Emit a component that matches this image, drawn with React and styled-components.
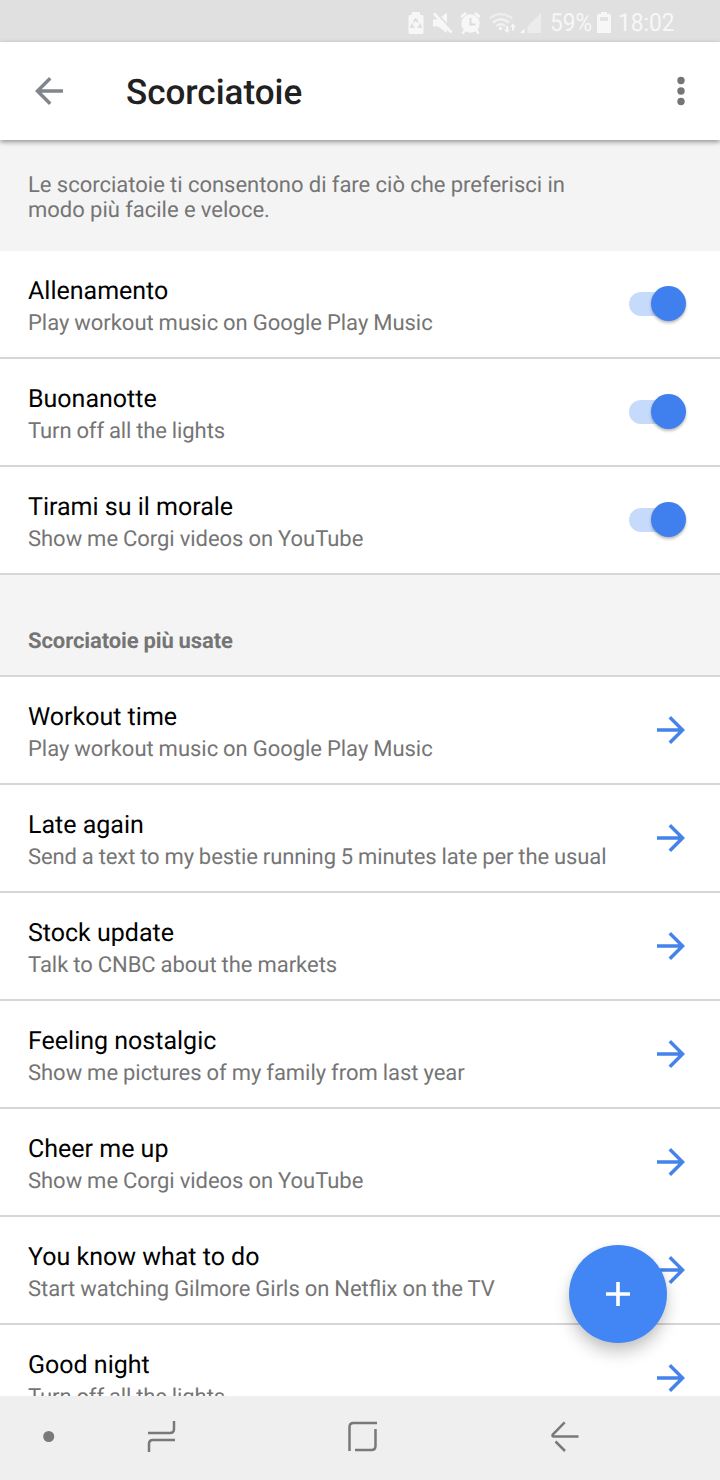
import React from 'react';
import styled, { createGlobalStyle, css } from 'styled-components';

const GlobalStyle = createGlobalStyle`
  * {
    box-sizing: border-box;
  }

  body {
    margin: 0;
    font-family: Roboto, 'Liberation Sans', sans-serif;
    text-rendering: geometricPrecision;
  }
`;

const Screen = styled.div`
  position: relative;
  display: flex;
  flex-direction: column;
  width: 720px;
  height: 1480px;
  overflow: hidden;
  background: #fff;
`;

const StatusBar = styled.div`
  display: flex;
  flex: none;
  align-items: center;
  justify-content: flex-end;
  height: 42px;
  padding: 4px 43px 0 0;
  background: #e0e0e0;
  color: #f7f7f7;
`;

const StatusIcons = styled.svg`
  display: block;
  width: 136px;
  height: 28px;
  margin-right: 7px;
`;

const StatusText = styled.span`
  width: ${({ $width }) => $width}px;
  padding-top: 2px;
  font-size: 25px;
  line-height: 28px;
  white-space: nowrap;
  transform: scaleX(0.91);
  transform-origin: left;
`;

const BatteryIcon = styled.svg`
  display: block;
  width: 14px;
  height: 24px;
  margin: 0 7px 3px 5px;
`;

const AppBar = styled.header`
  position: relative;
  z-index: 1;
  display: flex;
  flex: none;
  align-items: center;
  height: 98px;
  padding: 0 18px 0 28px;
  background: #fff;
  box-shadow: 0 2px 5px rgba(0, 0, 0, 0.4);
`;

const Icon = styled.svg`
  display: block;
  flex: none;
  width: 42px;
  height: 42px;
  fill: ${({ $color }) => $color};
`;

const Title = styled.h1`
  flex: 1;
  margin: 4px 0 0 56px;
  color: #212121;
  font-size: 35px;
  font-weight: 500;
  line-height: 42px;
`;

const Content = styled.main`
  flex: 1;
  min-height: 0;
  overflow: hidden;
`;

const mutedText = css`
  margin: 0;
  color: #757575;
  font-size: 22px;
`;

const Intro = styled.p`
  ${mutedText};
  height: 111px;
  padding: 33px 120px 0 28px;
  background: #f4f4f4;
  line-height: 25px;
  word-spacing: -0.2px;
`;

const Row = styled.div`
  display: flex;
  align-items: center;
  justify-content: space-between;
  height: 108px;
  padding: 0 28px;
  border-bottom: 2px solid #d6d6d6;
`;

const RowText = styled.div`
  padding-top: 8px;
`;

const RowTitle = styled.div`
  color: #000;
  font-size: 25px;
  line-height: 32px;
`;

const RowSubtitle = styled.div`
  ${mutedText};
  font-feature-settings: 'liga';
  letter-spacing: ${({ $tracking = -0.03 }) => $tracking}px;
  line-height: 32px;
  white-space: nowrap;
  word-spacing: -0.45px;
`;

const SectionHeader = styled.h2`
  ${mutedText};
  height: 102px;
  padding: 54px 28px 0;
  border-bottom: 2px solid #d6d6d6;
  background: #f4f4f4;
  font-weight: 700;
  letter-spacing: -0.1px;
  line-height: 26px;
  word-spacing: -0.45px;
`;

const Track = styled.div`
  display: flex;
  align-items: center;
  justify-content: flex-end;
  width: 57px;
  height: 24px;
  margin-right: 6px;
  border-radius: 12px;
  background: linear-gradient(#c6dafb, #c6dafb) left / 45px 24px no-repeat;
`;

const Thumb = styled.div`
  width: 35px;
  height: 35px;
  margin-top: -1px;
  flex: none;
  border-radius: 50%;
  background: #4080ee;
  box-shadow: 0 2px 3px rgba(0, 0, 0, 0.28);
`;

const Fab = styled.button`
  position: absolute;
  right: 53px;
  bottom: 137px;
  display: flex;
  align-items: center;
  justify-content: center;
  width: 98px;
  height: 98px;
  padding: 0;
  border: 0;
  border-radius: 50%;
  background: #4285f4;
  box-shadow: 0 10px 16px rgba(0, 0, 0, 0.2), 0 2px 8px rgba(0, 0, 0, 0.06);
`;

const NavBar = styled.nav`
  display: flex;
  flex: none;
  align-items: center;
  height: 84px;
  padding: 0 140px 4px 42px;
  background: #efefef;
`;

const NavIcon = styled.svg`
  display: block;
  width: ${({ $width }) => $width}px;
  height: 34px;
  margin-left: ${({ $gap = 0 }) => $gap}px;
  fill: none;
  stroke: #797979;
  stroke-width: 2.5;
`;

const routines = [
  { title: 'Allenamento', subtitle: 'Play workout music on Google Play Music' },
  { title: 'Buonanotte', subtitle: 'Turn off all the lights', tracking: -0.09 },
  { title: 'Tirami su il morale', subtitle: 'Show me Corgi videos on YouTube' },
];

const popular = [
  { title: 'Workout time', subtitle: 'Play workout music on Google Play Music' },
  {
    title: 'Late again',
    subtitle: 'Send a text to my bestie running 5 minutes late per the usual',
    tracking: -0.09,
  },
  { title: 'Stock update', subtitle: 'Talk to CNBC about the markets' },
  { title: 'Feeling nostalgic', subtitle: 'Show me pictures of my family from last year' },
  { title: 'Cheer me up', subtitle: 'Show me Corgi videos on YouTube' },
  { title: 'You know what to do', subtitle: 'Start watching Gilmore Girls on Netflix on the TV' },
  { title: 'Good night', subtitle: 'Turn off all the lights', tracking: -0.09 },
];

const Status = () => (
  <StatusBar>
    <StatusIcons viewBox="406 8 136 28" fill="#f7f7f7">
      {/* battery saver */}
      <path d="M411 11h8v3h2q1.500 0 1.500 1.500V31.500q0 1.500-1.500 1.500h-12q-1.500 0-1.500-1.500V15.500q0-1.500 1.500-1.500h1.500z" />
      <path d="M412.500 21l2.200-3 2.300 3.300M418.500 22.500l1.500 3.500h-3.500M413.500 26h-3.500l1.700-3.500" fill="none" stroke="#dadada" strokeWidth="1.500" />
      {/* muted */}
      <path d="M432 18.500h5l9-7v20.500l-9-6.500h-5z" />
      <path d="M434.500 11.500l18 19" stroke="#e0e0e0" strokeWidth="2.500" />
      <path d="M433 12.500l17.500 19" stroke="#f7f7f7" strokeWidth="2.600" />
      {/* alarm */}
      <circle cx="469.500" cy="22.500" r="9.200" />
      <path d="M460 16l5-4M479 16l-5-4M464 29l-2.500 3.500M475 29l2.500 3.500" stroke="#f7f7f7" strokeWidth="2.600" />
      <path d="M469.500 17v6.500h5" fill="none" stroke="#dcdcdc" strokeWidth="2" />
      {/* wifi */}
      <g fill="none" stroke="#f2f2f2" strokeWidth="2.400">
        <path d="M488.500 17.500q11.500-9 23 0" opacity="0.7" />
        <path d="M492 21.500q8-6.500 16 0M495.500 25q4.500-3.500 8.500 0" />
      </g>
      <circle cx="499.500" cy="27.500" r="1.700" />
      <path d="M505 25h2v3.500h2L506 32l-3-3.500h2zM511 29.500h2V26h2l-3-3.500-3 3.500h2z" />
      {/* signal */}
      <path d="M540 12v20h-13.500v-6.500z" opacity="0.5" />
      <path d="M523.500 27.500v4.500h-4.500z" />
    </StatusIcons>
    <StatusText $width={42}>59%</StatusText>
    <BatteryIcon viewBox="0 0 14 24">
      <path d="M4 2h6v2h2.500q1.500 0 1.500 1.500V23H0V5.500Q0 4 1.500 4H4z" fill="#f7f7f7" />
      <path d="M3 7h8v4H3z" fill="#e3e3e3" />
    </BatteryIcon>
    <StatusText $width={59}>18:02</StatusText>
  </StatusBar>
);

const ArrowRight = () => (
  <Icon viewBox="0 0 24 24" $color="#4484ea">
    <path d="M12 4l-1.410 1.410L16.170 11H4v2h12.170l-5.580 5.590L12 20l8-8z" />
  </Icon>
);

const Item = ({ title, subtitle, tracking, children }) => (
  <Row>
    <RowText>
      <RowTitle>{title}</RowTitle>
      <RowSubtitle $tracking={tracking}>{subtitle}</RowSubtitle>
    </RowText>
    {children}
  </Row>
);

const App = () => (
  <Screen>
    <GlobalStyle />
    <Status />
    <AppBar>
      <Icon viewBox="0 0 24 24" $color="#80868b">
        <path d="M20 11H7.830l5.590-5.590L12 4l-8 8 8 8 1.410-1.410L7.830 13H20v-2z" />
      </Icon>
      <Title>Scorciatoie</Title>
      <Icon viewBox="0 0 42 42" $color="#757575">
        <circle cx="21" cy="10.500" r="3.700" />
        <circle cx="21" cy="21" r="3.700" />
        <circle cx="21" cy="31.500" r="3.700" />
      </Icon>
    </AppBar>
    <Content>
      <Intro>
        Le scorciatoie ti consentono di fare ciò che preferisci in modo più facile e veloce.
      </Intro>
      {routines.map(item => (
        <Item key={item.title} {...item}>
          <Track>
            <Thumb />
          </Track>
        </Item>
      ))}
      <SectionHeader>Scorciatoie più usate</SectionHeader>
      {popular.map(item => (
        <Item key={item.title} {...item}>
          <ArrowRight />
        </Item>
      ))}
    </Content>
    <Fab aria-label="+">
      <svg width="26" height="26" viewBox="0 0 26 26">
        <path d="M13 1v24M1 13h24" stroke="#fff" strokeWidth="3.600" />
      </svg>
    </Fab>
    <NavBar>
      <NavIcon $width={14} viewBox="0 0 14 34">
        <circle cx="6.700" cy="17.500" r="5.500" fill="#797979" stroke="none" />
      </NavIcon>
      <NavIcon $width={30} $gap={91} viewBox="147 1419 30 34">
        <path d="M148 1433h22q4 0 4-4v-8M175 1440h-22q-4 0-4 4v8" />
      </NavIcon>
      <NavIcon $width={32} $gap={169} viewBox="346 1419 32 34">
        <path d="M349.500 1451v-24q0-4 4-4h23.500M375.500 1429v17q0 4-4 4h-16.500" />
      </NavIcon>
      <NavIcon $width={30} $gap={172} viewBox="550 1419 30 34">
        <path d="M578.500 1436.500h-24.500q-2.500 0-1-2.200l11.700-12M555.500 1441.500l9.500 9.500" />
      </NavIcon>
    </NavBar>
  </Screen>
);

export default App;
